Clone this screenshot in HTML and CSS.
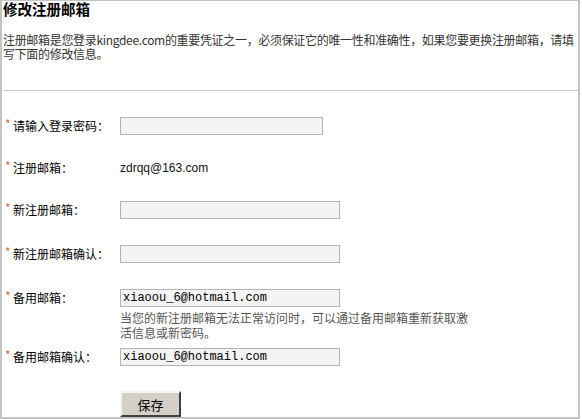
FILE: index.html
```html
<!DOCTYPE html>
<html lang="zh-CN">
<head>
<meta charset="utf-8">
<title>修改注册邮箱</title>
<link rel="stylesheet" href="styles.css">
</head>
<body>
<div class="frame">
  <h1 class="title">修改注册邮箱</h1>
  <p class="desc">注册邮箱是您登录kingdee.com的重要凭证之一，必须保证它的唯一性和准确性，如果您要更换注册邮箱，请填写下面的修改信息。</p>
  <hr class="rule">
  <form class="form">
    <div class="row">
      <label class="label"><span class="req">*</span>请输入登录密码：</label>
      <div class="field"><input class="input input--short" type="password"></div>
    </div>
    <div class="row">
      <span class="label"><span class="req">*</span>注册邮箱：</span>
      <div class="field"><span class="value">zdrqq@163.com</span></div>
    </div>
    <div class="row">
      <label class="label"><span class="req">*</span>新注册邮箱：</label>
      <div class="field"><input class="input" type="text"></div>
    </div>
    <div class="row row--loose">
      <label class="label"><span class="req">*</span>新注册邮箱确认：</label>
      <div class="field"><input class="input" type="text"></div>
    </div>
    <div class="row row--loose">
      <label class="label"><span class="req">*</span>备用邮箱：</label>
      <div class="field">
        <input class="input" type="text" value="xiaoou_6@hotmail.com">
        <p class="hint">当您的新注册邮箱无法正常访问时，可以通过备用邮箱重新获取激活信息或新密码。</p>
      </div>
    </div>
    <div class="row row--tight">
      <label class="label"><span class="req">*</span>备用邮箱确认：</label>
      <div class="field"><input class="input" type="text" value="xiaoou_6@hotmail.com"></div>
    </div>
    <div class="row row--button">
      <span class="label"></span>
      <div class="field"><button class="btn" type="button">保存</button></div>
    </div>
  </form>
</div>
</body>
</html>
```

FILE: styles.css
```css
html, body {
  margin: 0;
  padding: 0;
  background: #fff;
}
body {
  font-family: "Noto Sans CJK SC", "Liberation Sans", sans-serif;
  font-size: 12px;
  color: #000;
}
.frame {
  box-sizing: border-box;
  width: 580px;
  height: 419px;
  border: 2px solid #c4c4c4;
  border-top-width: 1px;
  padding-left: 1px;
  overflow: hidden;
}
.title {
  margin: 0;
  font-size: 14.5px;
  line-height: 16px;
  font-weight: bold;
  color: #000;
}
.desc {
  margin: 16px 0 0 0;
  line-height: 14px;
  color: #333;
  width: 576px;
  letter-spacing: -0.32px;
}
.rule {
  margin: 29px 0 0 0;
  border: 0;
  border-top: 1px solid #c8c8c8;
  height: 0;
}
.form {
  margin: 26px 0 0 0;
  display: flex;
  flex-direction: column;
}
.row {
  display: flex;
  align-items: flex-start;
  margin-top: 24px;
}
.row:first-child { margin-top: 0; }
.row--loose { margin-top: 26px; }
.row--tight { margin-top: 8px; }
.row--button { margin-top: 25px; }
.label {
  width: 117px;
  flex: none;
  padding-left: 2px;
  box-sizing: border-box;
  line-height: 18px;
  color: #000;
}
.req {
  color: #c8733a;
  display: inline-block;
  width: 8px;
  font-size: 12px;
  position: relative;
  top: -2px;
}
.field {
  display: flex;
  flex-direction: column;
  align-items: flex-start;
}
.value {
  font-family: "Liberation Sans", sans-serif;
  font-size: 12px;
  line-height: 18px;
  color: #111;
}
.input {
  box-sizing: border-box;
  width: 220px;
  height: 18px;
  margin: 0;
  padding: 0 2px;
  border: 1px solid #b4b4b4;
  background: #f4f4f4;
  font-family: "Liberation Mono", monospace;
  font-size: 12px;
  color: #000;
  outline: none;
}
.input--short { width: 203px; }
.hint {
  margin: 3px 0 0 0;
  width: 352px;
  line-height: 15px;
  color: #555;
}
.btn {
  box-sizing: border-box;
  width: 61px;
  height: 26px;
  margin: 0;
  padding: 0;
  background: #d4d0c8;
  border: 2px solid;
  border-color: #f4f4f4 #404040 #404040 #f4f4f4;
  font-family: "Noto Sans CJK SC", sans-serif;
  font-size: 13px;
  color: #000;
}
```
